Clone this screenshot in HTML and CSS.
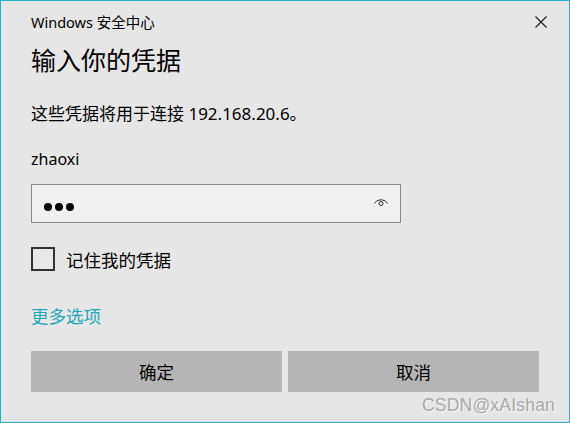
FILE: index.html
```html
<!DOCTYPE html>
<html lang="zh-CN">
  <head>
    <meta charset="UTF-8" />
    <title>Windows 安全中心</title>
    <link rel="stylesheet" href="styles.css">
  </head>
  <body>
    <div class="dialog">
      <div class="title-bar">
        <span class="app-name">Windows 安全中心</span>
        <svg class="close" width="12" height="12" viewBox="0 0 12 12">
          <path d="M0.5 0.5 L11.5 11.5 M11.5 0.5 L0.5 11.5" stroke="#222" stroke-width="1.2" fill="none" />
        </svg>
      </div>

      <h1 class="heading">输入你的凭据</h1>
      <p class="desc">这些凭据将用于连接 192.168.20.6。</p>
      <p class="user">zhaoxi</p>

      <div class="password">
        <div class="dots">
          <span></span><span></span><span></span>
        </div>
        <svg class="eye" width="16" height="10" viewBox="0 0 16 10">
          <path d="M1.5 6.5 A7 6 0 0 1 14.5 6.5" stroke="#333" stroke-width="1" fill="none" />
          <circle cx="8" cy="6.5" r="2" stroke="#333" stroke-width="1" fill="none" />
        </svg>
      </div>

      <label class="remember">
        <span class="checkbox"></span>
        <span>记住我的凭据</span>
      </label>

      <a class="more">更多选项</a>

      <div class="buttons">
        <button class="btn">确定</button>
        <button class="btn">取消</button>
      </div>

      <div class="watermark">CSDN@xAIshan</div>
    </div>
  </body>
</html>
```

FILE: styles.css
```css
* {
  margin: 0;
  padding: 0;
  box-sizing: border-box;
}

:root {
  --bg: #e6e6e6;
  --accent: #1fa7b9;
  --frame: #22b4c2;
  --text: #000000;
  --field-bg: #f0f0f0;
  --field-border: #8a8a8a;
  --btn-bg: #b5b5b5;
}

body {
  width: 570px;
  height: 423px;
  font-family: "Noto Sans", "Noto Sans CJK SC", sans-serif;
  color: var(--text);
  background-color: var(--bg);
}

.dialog {
  position: relative;
  width: 570px;
  height: 423px;
  border: 1px solid var(--frame);
  background-color: var(--bg);
  padding: 0 30px;
  display: flex;
  flex-direction: column;
}

.title-bar {
  display: flex;
  justify-content: space-between;
  align-items: center;
  margin-top: 11px;
  height: 20px;
  margin-right: -8px;
}

.app-name {
  font-size: 14.5px;
  line-height: 20px;
}

.close {
  display: block;
}

.heading {
  margin-top: 10px;
  font-family: "Noto Sans CJK SC", sans-serif;
  font-size: 25px;
  font-weight: normal;
  line-height: 34px;
}

.desc {
  margin-top: 26px;
  font-size: 17px;
  line-height: 24px;
}

.user {
  margin-top: 21px;
  font-size: 16px;
  line-height: 24px;
}

.password {
  margin-top: 13px;
  width: 370px;
  height: 39px;
  border: 1px solid var(--field-border);
  background-color: var(--field-bg);
  display: flex;
  align-items: center;
  justify-content: space-between;
  padding: 0 11px 0 12px;
}

.dots {
  display: flex;
  gap: 3px;
  padding-top: 6px;
}

.dots span {
  width: 8px;
  height: 8px;
  border-radius: 50%;
  background-color: #000;
}

.eye {
  margin-top: -4px;
}

.remember {
  margin-top: 24px;
  display: flex;
  align-items: center;
  gap: 11px;
  height: 24px;
  font-family: "Noto Sans CJK SC", sans-serif;
  font-size: 17.5px;
}

.checkbox {
  width: 24px;
  height: 24px;
  border: 2px solid #333;
  background-color: #e8e8e8;
}

.more {
  margin-top: 33px;
  font-family: "Noto Sans CJK SC", sans-serif;
  font-size: 17.5px;
  line-height: 24px;
  color: var(--accent);
}

.buttons {
  margin-top: 23px;
  display: grid;
  grid-template-columns: 1fr 1fr;
  gap: 6px;
}

.btn {
  height: 41px;
  border: none;
  background-color: var(--btn-bg);
  font-family: "Noto Sans CJK SC", sans-serif;
  font-size: 17.5px;
  color: var(--text);
}

.watermark {
  position: absolute;
  right: 14px;
  bottom: 6px;
  font-family: "Liberation Sans", sans-serif;
  font-size: 17.5px;
  letter-spacing: 0.2px;
  color: #a8a8a8;
  text-shadow: 1px 1px 0 #f6f6f6;
}
```
